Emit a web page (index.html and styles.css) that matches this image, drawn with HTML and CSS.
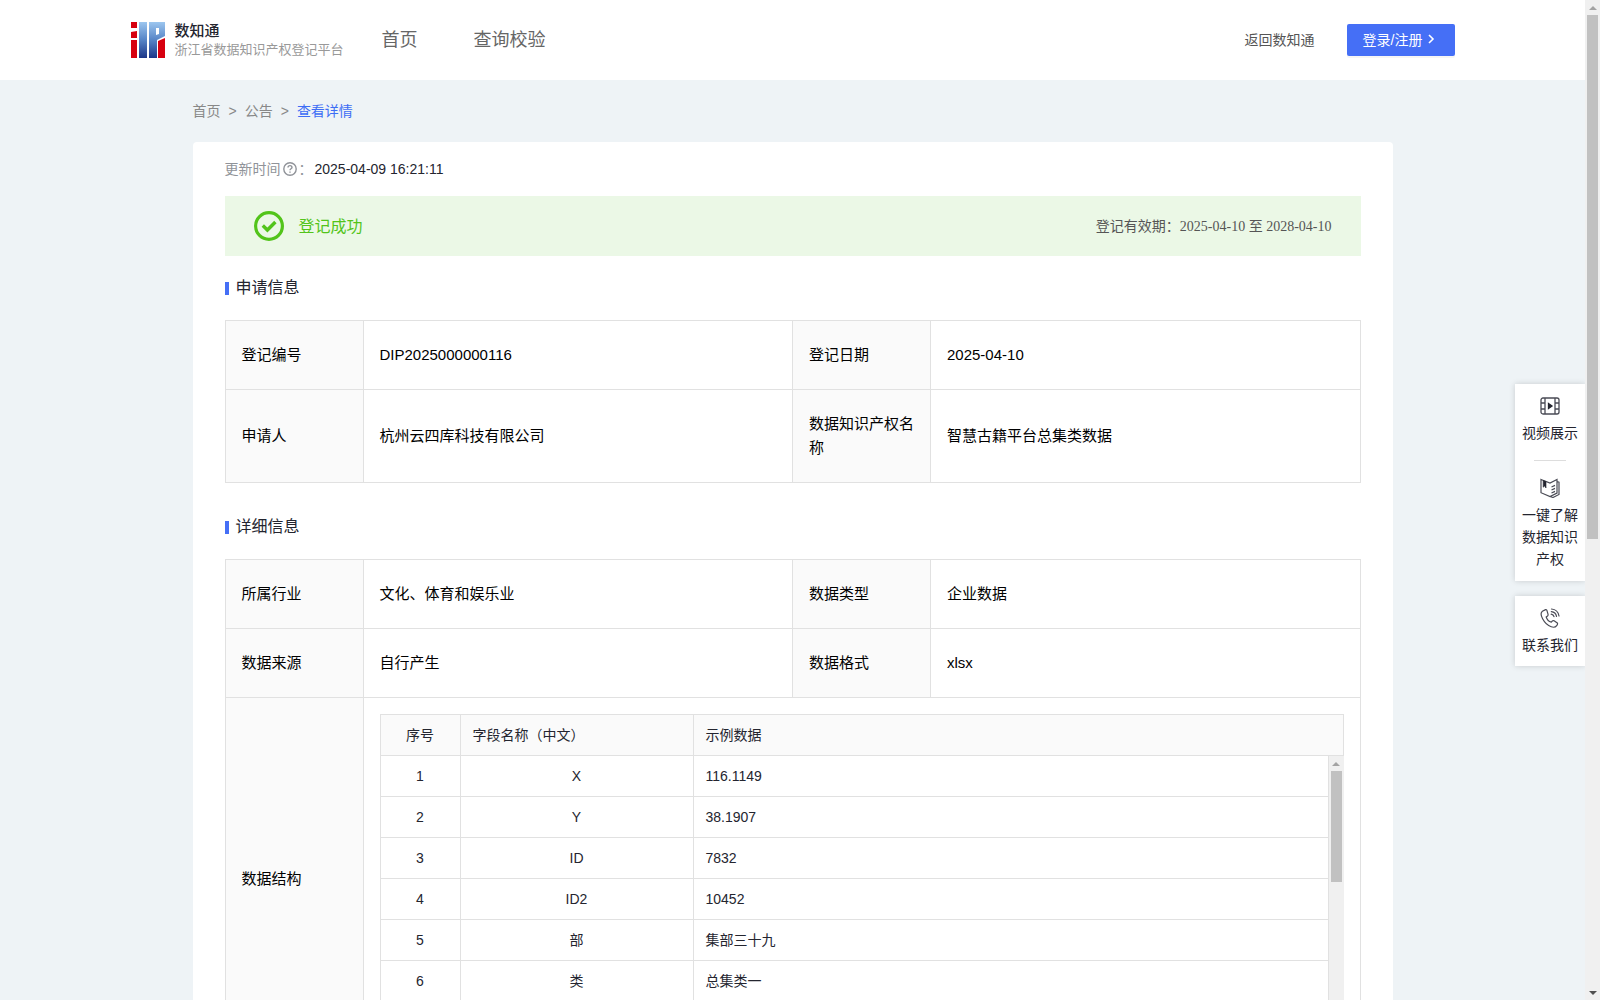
FILE: index.html
```
<!DOCTYPE html>
<html lang="zh-CN">
<head>
  <meta charset="UTF-8">
  <meta name="viewport" content="width=device-width, initial-scale=1.0">
  <title>浙江省数据知识产权登记平台</title>
  <link rel="stylesheet" href="styles.css">
</head>
<body>

  <div class="page">
    <header class="header">
      <div class="header-inner">
        <a class="logo" href="#">
          <svg width="34" height="36" viewBox="0 0 34 36">
            <defs>
              <linearGradient id="blue" x1="0" y1="0" x2="0" y2="36" gradientUnits="userSpaceOnUse">
                <stop offset="0" stop-color="#9cc6ef"/>
                <stop offset="0.5" stop-color="#5684c6"/>
                <stop offset="1" stop-color="#1c3688"/>
              </linearGradient>
            </defs>
            <path fill="#d7000f" d="M0 0h6v6H0zM0 10l6-1v7H0zM0 18h6v18H0zM27 19l7-3v20h-7z"/>
            <path fill="url(#blue)" fill-rule="evenodd" d="M8 0h8v36H8zM18 0h16v14l-8 4v18h-8zM25 6v7l3-1V6z"/>
          </svg>
          <span class="logo-text">
            <strong>数知通</strong>
            <small>浙江省数据知识产权登记平台</small>
          </span>
        </a>
        <nav class="nav">
          <a href="#">首页</a>
          <a href="#">查询校验</a>
        </nav>
        <a class="back" href="#">返回数知通</a>
        <button class="login" type="button">登录/注册
          <svg width="8" height="10" viewBox="0 0 8 10"><path d="M2 1l4 4-4 4" fill="none" stroke="#fff" stroke-width="1.6"/></svg>
        </button>
      </div>
    </header>

    <main class="main">
      <nav class="breadcrumb">
        <a href="#">首页</a>
        <span>&gt;</span>
        <a href="#">公告</a>
        <span>&gt;</span>
        <a class="current" href="#">查看详情</a>
      </nav>

      <div class="card">
        <div class="update">
          <span class="update-label">更新时间</span>
          <svg width="14" height="14" viewBox="0 0 14 14" fill="none" stroke="#909399" stroke-width="1.4">
            <circle cx="7" cy="7" r="6.2"/>
            <path d="M5 5.600C5 4.300 5.900 3.600 7 3.600s2 .7 2 1.800c0 1.400-2 1.400-2 2.900M7 9.400v1.300"/>
          </svg>
          <span class="update-label">：</span>
          <span>2025-04-09 16:21:11</span>
        </div>

        <div class="banner">
          <svg width="30" height="30" viewBox="0 0 30 30" fill="none" stroke="#52c41a">
            <circle cx="15" cy="15" r="13.4" stroke-width="3.2"/>
            <path d="M8.800 14.600l4.600 4.400 8-8" stroke-width="3.4"/>
          </svg>
          <span class="banner-status">登记成功</span>
          <span class="banner-date">登记有效期：2025-04-10 至 2028-04-10</span>
        </div>

        <h2 class="title">申请信息</h2>
        <table class="info">
          <tr>
            <th>登记编号</th><td>DIP2025000000116</td>
            <th>登记日期</th><td>2025-04-10</td>
          </tr>
          <tr>
            <th>申请人</th><td>杭州云四库科技有限公司</td>
            <th>数据知识产权名称</th><td>智慧古籍平台总集类数据</td>
          </tr>
        </table>

        <h2 class="title">详细信息</h2>
        <table class="info">
          <tr>
            <th>所属行业</th><td>文化、体育和娱乐业</td>
            <th>数据类型</th><td>企业数据</td>
          </tr>
          <tr>
            <th>数据来源</th><td>自行产生</td>
            <th>数据格式</th><td>xlsx</td>
          </tr>
          <tr>
            <th>数据结构</th>
            <td class="nested" colspan="3">
              <div class="fields">
                <table>
                  <thead>
                    <tr><th>序号</th><th>字段名称（中文）</th><th>示例数据</th></tr>
                  </thead>
                </table>
                <div class="fields-body">
                  <table>
                    <tr><td>1</td><td>X</td><td>116.1149</td></tr>
                    <tr><td>2</td><td>Y</td><td>38.1907</td></tr>
                    <tr><td>3</td><td>ID</td><td>7832</td></tr>
                    <tr><td>4</td><td>ID2</td><td>10452</td></tr>
                    <tr><td>5</td><td>部</td><td>集部三十九</td></tr>
                    <tr><td>6</td><td>类</td><td>总集类一</td></tr>
                  </table>
                  <div class="scrollbar">
                    <span class="arrow up muted"></span>
                    <div class="track"><div class="thumb" style="height: 43%"></div></div>
                    <span class="arrow down"></span>
                  </div>
                </div>
              </div>
            </td>
          </tr>
        </table>
      </div>
    </main>

    <aside class="side">
      <div class="side-box">
        <a href="#">
          <svg width="20" height="20" viewBox="0 0 20 20" fill="none" stroke="#4a4b55" stroke-width="1.3">
            <rect x="1" y="2" width="18" height="16" rx="2"/>
            <path d="M5 2v16M15 2v16M1 7h4M1 13h4M15 7h4M15 13h4"/>
            <path d="M8.500 7.500l3.500 2.500-3.500 2.500z" fill="#24252f" stroke="#24252f"/>
          </svg>
          视频展示
        </a>
        <a href="#">
          <svg width="20" height="20" viewBox="0 0 20 20" fill="none" stroke="#4a4b55" stroke-width="1.2">
            <path d="M1 1.500l9 3.600 7-3.600v13.600l-7 3.400-9-3.800zM17 3.500l2 .6v12.400l-6 3-3-1"/>
            <path d="M11.500 9l3.500-1.600M11.500 12l3.500-1.600M11.500 15l3.500-1.600"/>
            <path d="M3.200 2.400v6.800l1.400-1.300 1.400 2.100V3.600z" fill="#24252f" stroke="#24252f" stroke-width=".6"/>
          </svg>
          一键了解数据知识产权
        </a>
      </div>
      <div class="side-box">
        <a href="#">
          <svg width="20" height="20" viewBox="0 0 20 20" fill="none" stroke="#4a4b55" stroke-width="1.2" stroke-linecap="round">
            <path d="M5.600 1.600L2.400 3.200C.8 4.400.8 7.400 2.600 10.800c2 3.800 5 6.800 8.600 8 2.300.8 4.400.3 5.500-1.200.8-1.100 1.200-2 .6-2.600l-3.200-2.200c-.8-.5-1.400-.3-1.900.3l-.9 1.100C8.900 13.600 7 11.500 6.200 9l1.300-1c.6-.5.7-1.100.5-1.800L6.900 2.400c-.2-.7-.7-1-1.300-.8z"/>
            <path d="M11.500 1c4 .3 6.800 3 7.500 7M11.300 3.600c2.900.3 4.700 2 5.200 4.700M11.200 6.200c1.600.2 2.500 1 2.800 2.500"/>
          </svg>
          联系我们
        </a>
      </div>
    </aside>
  </div>

  <div class="scrollbar">
    <span class="arrow up muted"></span>
    <div class="track"><div class="thumb" style="height: 54%"></div></div>
    <span class="arrow down"></span>
  </div>

</body>
</html>
```
FILE: styles.css
```
* {
  box-sizing: border-box;
}

body {
  display: flex;
  height: 100vh;
  margin: 0;
  overflow: hidden;
  font-family: "Liberation Sans", "Noto Sans CJK SC", sans-serif;
  font-size: 14px;
  color: #24252f;
  background-color: #eef3f6;
}

a {
  color: inherit;
  text-decoration: none;
}

table {
  border-collapse: collapse;
  table-layout: fixed;
  width: 100%;
}

.page {
  position: relative;
  flex: 1;
  overflow: hidden;
}

/* scrollbar */
.scrollbar {
  display: flex;
  flex-direction: column;
  flex: none;
  width: 15px;
  background-color: #f0f0f0;
}

.track {
  flex: 1;
  padding: 0 2px;
}

.thumb {
  background-color: #c1c1c1;
}

.arrow {
  display: flex;
  align-items: center;
  justify-content: center;
  height: 15px;
}

.arrow::before {
  content: "";
  border: 4px solid transparent;
  border-top: none;
  border-bottom-color: #505050;
}

.arrow.down::before {
  transform: rotate(180deg);
}

.arrow.muted::before {
  border-bottom-color: #a3a3a3;
}

/* header */
.header {
  background-color: #fff;
}

.header-inner {
  display: flex;
  align-items: center;
  max-width: 1324px;
  height: 80px;
  margin: 0 auto;
}

.logo {
  display: flex;
  align-items: center;
  gap: 10px;
}

.logo-text {
  display: flex;
  flex-direction: column;
}

.logo-text strong {
  font-size: 15px;
  font-weight: 500;
  line-height: 20px;
}

.logo-text small {
  font-size: 13px;
  line-height: 18px;
  color: #999;
}

.nav {
  display: flex;
  gap: 56px;
  margin-left: 38px;
  padding-bottom: 4px;
  font-size: 18px;
  color: #666;
}

.back {
  margin-left: auto;
  padding-bottom: 2px;
  color: #555;
}

.login {
  display: flex;
  align-items: center;
  gap: 4px;
  height: 32px;
  margin-left: 32px;
  padding: 0 20px 2px 16px;
  border: none;
  border-radius: 2px;
  font: inherit;
  color: #fff;
  background-color: #456ff6;
  box-shadow: 0 2px 0 rgba(0, 0, 0, 0.04);
  cursor: pointer;
}

/* content */
.main {
  max-width: 1200px;
  margin: 0 auto;
}

.breadcrumb {
  display: flex;
  gap: 8px;
  padding: 20px 0;
  line-height: 22px;
  color: #888;
}

.breadcrumb .current {
  color: #3d6df5;
}

.card {
  padding: 16px 32px 32px;
  border-radius: 4px;
  background-color: #fff;
}

.update {
  display: flex;
  align-items: center;
  gap: 2px;
  margin-bottom: 16px;
  line-height: 22px;
}

.update-label {
  color: #909399;
}

.banner {
  display: flex;
  align-items: center;
  height: 60px;
  padding: 0 29px;
  background-color: #ebf8e6;
}

.banner-status {
  margin-left: 15px;
  padding-bottom: 3px;
  font-size: 16px;
  color: #52c41a;
}

.banner-date {
  margin-left: auto;
  padding-bottom: 3px;
  font-family: "Liberation Serif", "Noto Sans CJK SC", serif;
  color: #555;
}

.title {
  display: flex;
  align-items: center;
  gap: 7px;
  margin: 20px 0;
  font-size: 16px;
  font-weight: normal;
  line-height: 24px;
}

.title::before {
  content: "";
  width: 4px;
  height: 13px;
  background-color: #456ff6;
}

.info {
  margin-bottom: 32px;
  font-size: 15px;
  line-height: 24px;
  color: #000;
}

.info > tbody > tr > th,
.info > tbody > tr > td {
  padding: 22px 16px;
  border: 1px solid #e1e1e1;
  font-weight: normal;
  text-align: left;
}

.info > tbody > tr > th {
  width: 138px;
  background-color: #fafafa;
}

.info > tbody > tr > td.nested {
  padding: 16px;
}

.fields {
  font-size: 14px;
  line-height: 24px;
  color: #24252f;
}

.fields th,
.fields td {
  height: 41px;
  padding: 8px 12px;
  border: 1px solid #e1e1e1;
  font-weight: normal;
  text-align: left;
}

.fields th {
  background-color: #fafafa;
}

.fields th:nth-child(1),
.fields td:nth-child(1) {
  width: 80px;
  text-align: center;
}

.fields th:nth-child(2),
.fields td:nth-child(2) {
  width: 233px;
}

.fields td:nth-child(2) {
  text-align: center;
}

.fields-body {
  display: flex;
  align-items: flex-start;
  height: 288px;
}

.fields-body table {
  flex: 1;
}

.fields-body .scrollbar {
  align-self: stretch;
}

.fields-body tr:first-child td {
  height: 40px;
  border-top: none;
}

/* floating links */
.side {
  position: absolute;
  top: 384px;
  right: 0;
  display: flex;
  flex-direction: column;
  gap: 15px;
  width: 70px;
}

.side-box {
  padding: 0 6px;
  background-color: #fff;
  box-shadow: 0 0 6px rgba(0, 0, 0, 0.16);
}

.side-box a {
  display: flex;
  flex-direction: column;
  align-items: center;
  gap: 6px;
  padding: 12px 0 10px;
  line-height: 22px;
  text-align: center;
}

.side-box a + a {
  padding: 6px 0 11px;
}

.side-box a + a::before {
  content: "";
  width: 32px;
  height: 1px;
  margin-bottom: 11px;
  background-color: #ddd;
}
```
